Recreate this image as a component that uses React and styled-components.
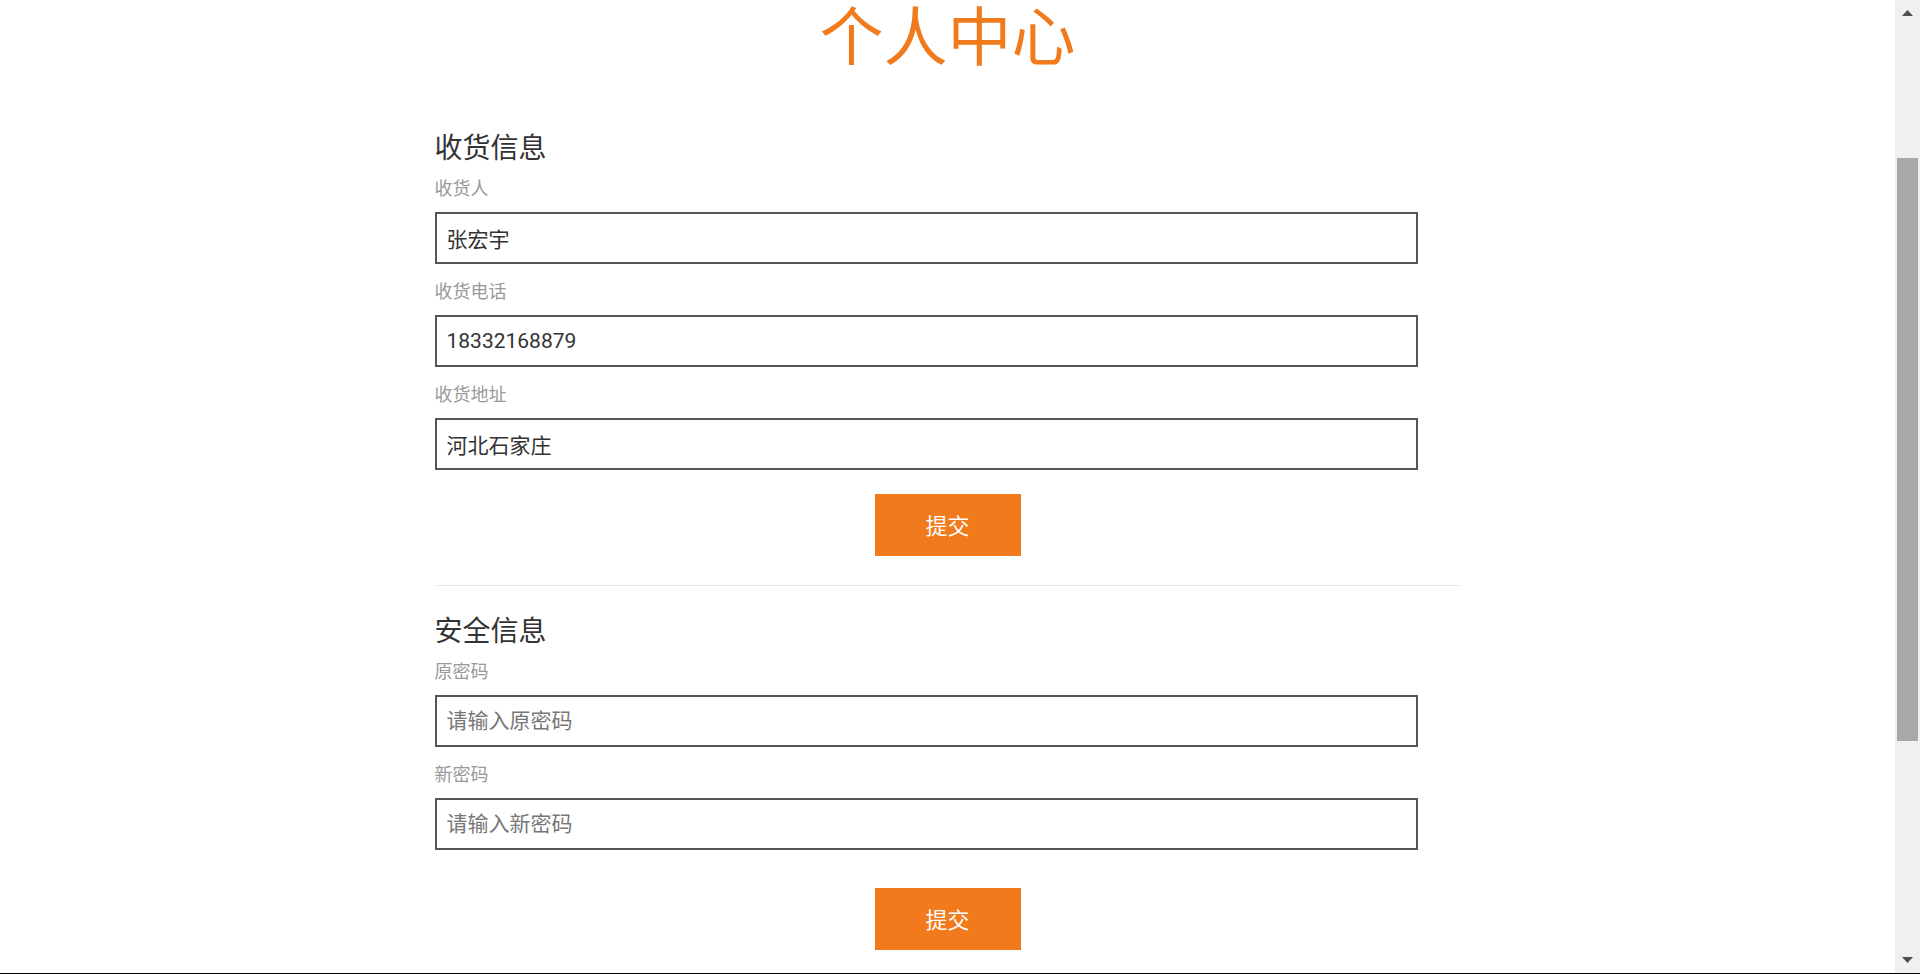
import React from "react";
import styled, { createGlobalStyle } from "styled-components";

const GlobalStyle = createGlobalStyle`
  html, body {
    margin: 0;
    padding: 0;
    background: #fff;
    overflow: hidden;
  }
  body {
    font-family: Roboto, "Noto Sans CJK SC", sans-serif;
  }
  * {
    box-sizing: border-box;
  }
`;

const Frame = styled.div`
  display: flex;
  flex-direction: row;
  height: 974px;
  border-bottom: 1px solid #000;
`;

const Page = styled.main`
  flex: 1;
  overflow: hidden;
`;

const Title = styled.h1`
  margin: 0;
  padding-top: 7px;
  text-align: center;
  font-size: 64px;
  line-height: 64px;
  font-weight: 400;
  color: #f07a1c;
`;

const Container = styled.div`
  width: 1026px;
  margin: 58px auto 0;
`;

const Section = styled.section`
  display: flex;
  flex-direction: column;
`;

const Heading = styled.h2`
  margin: 0 0 7px;
  font-size: 28px;
  line-height: 40px;
  font-weight: 400;
  color: #333;
`;

const Field = styled.div`
  display: flex;
  flex-direction: column;
  width: 983px;
  margin-bottom: 15px;
`;

const Label = styled.label`
  font-size: 18px;
  line-height: 26px;
  color: #999;
  margin-bottom: 10px;
`;

const Input = styled.input`
  height: 52px;
  width: 100%;
  border: 2px solid #555;
  border-radius: 0;
  padding: 0 10px;
  font-family: Roboto, "Noto Sans CJK SC", sans-serif;
  font-size: 21px;
  color: #333;
  outline: none;
  &::placeholder {
    color: #777;
  }
`;

const SubmitButton = styled.button`
  align-self: center;
  width: 146px;
  height: 62px;
  margin-top: ${(p) => p.$top}px;
  padding: 0 0 3px;
  border: none;
  background: #f07a1c;
  color: #fff;
  font-family: Roboto, "Noto Sans CJK SC", sans-serif;
  font-size: 22px;
  cursor: pointer;
`;

const Divider = styled.hr`
  margin: 29px 0 26px;
  border: none;
  border-top: 1px solid #e8e8e8;
`;

const Scrollbar = styled.div`
  width: 25px;
  display: flex;
  flex-direction: column;
  background: #f0f0f0;
`;

const ScrollArrow = styled.div`
  height: 24px;
  display: flex;
  justify-content: center;
  align-items: ${(p) => (p.$down ? "flex-start" : "flex-end")};
  padding: ${(p) => (p.$down ? "8px 0 0" : "0 0 8px")};
`;

const Track = styled.div`
  flex: 1;
  display: flex;
  justify-content: center;
  padding-top: 134px;
`;

const Thumb = styled.div`
  width: 21px;
  height: 583px;
  background: #a8a8a8;
`;

const Arrow = ({ down }) => (
  <svg width="11" height="6" viewBox="0 0 11 6">
    <polygon
      points={down ? "0,0 11,0 5.5,6" : "0,6 11,6 5.5,0"}
      fill="#505050"
    />
  </svg>
);

const FormField = ({ label, value, placeholder }) => (
  <Field>
    <Label>{label}</Label>
    <Input defaultValue={value} placeholder={placeholder} />
  </Field>
);

export default function App() {
  return (
    <>
      <GlobalStyle />
      <Frame>
        <Page>
          <Title>个人中心</Title>
          <Container>
            <Section>
              <Heading>收货信息</Heading>
              <FormField label="收货人" value="张宏宇" />
              <FormField label="收货电话" value="18332168879" />
              <FormField label="收货地址" value="河北石家庄" />
              <SubmitButton $top={9}>提交</SubmitButton>
            </Section>
            <Divider />
            <Section>
              <Heading>安全信息</Heading>
              <FormField label="原密码" placeholder="请输入原密码" />
              <FormField label="新密码" placeholder="请输入新密码" />
              <SubmitButton $top={23}>提交</SubmitButton>
            </Section>
          </Container>
        </Page>
        <Scrollbar>
          <ScrollArrow>
            <Arrow />
          </ScrollArrow>
          <Track>
            <Thumb />
          </Track>
          <ScrollArrow $down>
            <Arrow down />
          </ScrollArrow>
        </Scrollbar>
      </Frame>
    </>
  );
}
